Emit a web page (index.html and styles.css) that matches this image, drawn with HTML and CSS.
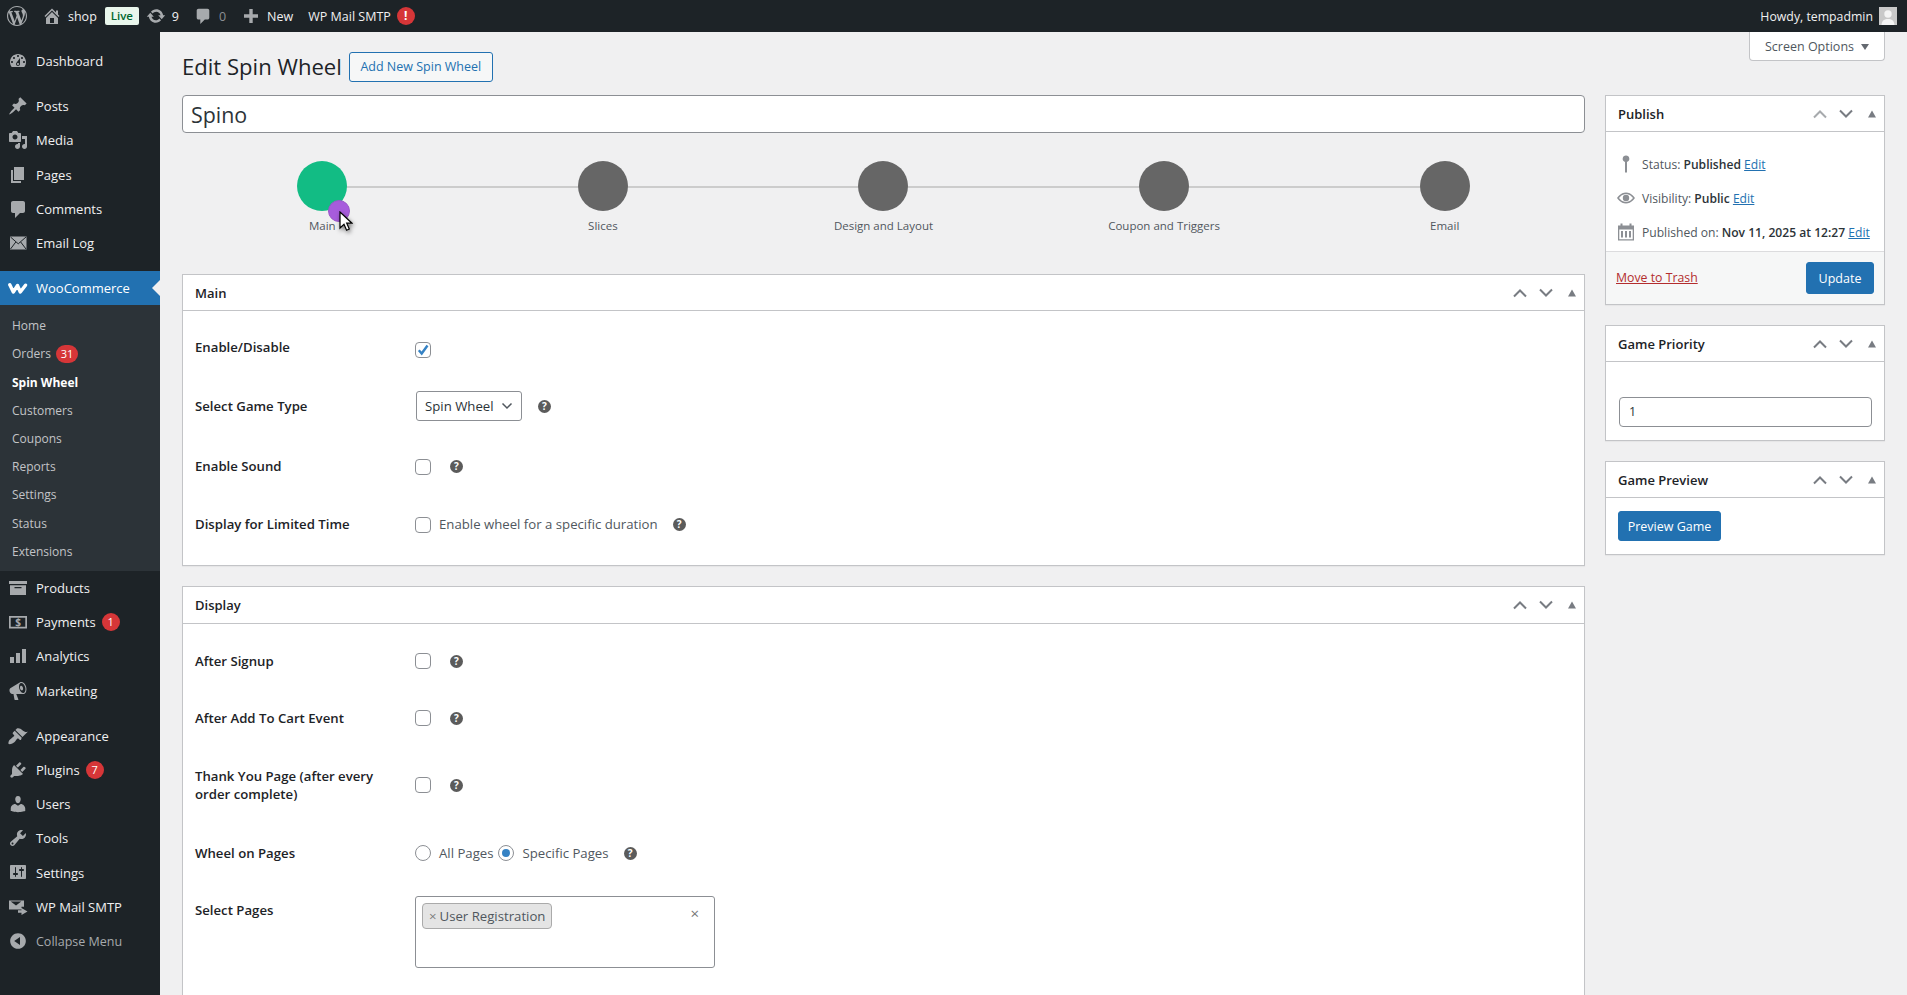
FILE: index.html
```html
<!DOCTYPE html>
<html lang="en">
<head>
<meta charset="utf-8">
<title>Edit Spin Wheel</title>
<link rel="stylesheet" href="styles.css">
</head>
<body>
<svg class="defs" width="0" height="0" aria-hidden="true">
  <symbol id="up" viewBox="0 0 16 10"><path d="M2 8.500 8 2.500l6 6" fill="none" stroke-width="2"/></symbol>
  <symbol id="down" viewBox="0 0 16 10"><path d="M2 1.500 8 7.500l6-6" fill="none" stroke-width="2"/></symbol>
  <symbol id="tri" viewBox="0 0 10 8"><path d="M5 .5 9 7.500H1z"/></symbol>
</svg>

<header class="adminbar">
  <div class="bar-left">
    <svg class="bar-logo" viewBox="0 0 20 20"><path d="M20 10c0-5.510-4.490-10-10-10C4.480 0 0 4.490 0 10c0 5.520 4.480 10 10 10 5.510 0 10-4.480 10-10zM7.780 15.370L4.370 6.220c.55-.02 1.170-.08 1.170-.08.5-.06.44-1.130-.06-1.110 0 0-1.450.11-2.370.11-.18 0-.37 0-.58-.01C4.120 2.690 6.870 1.110 10 1.110c2.330 0 4.450.87 6.050 2.340-.68-.11-1.650.39-1.650 1.580 0 .74.45 1.360.9 2.100.35.61.55 1.360.55 2.460 0 1.490-1.400 5-1.400 5l-3.030-8.370c.54-.02.82-.17.82-.17.5-.05.44-1.250-.06-1.220 0 0-1.440.12-2.380.12-.87 0-2.330-.12-2.330-.12-.5-.03-.56 1.200-.06 1.220l.92.08 1.260 3.410zM17.410 10c.24-.64.74-1.870.43-4.250.7 1.290 1.050 2.710 1.050 4.250 0 3.290-1.730 6.240-4.400 7.780.97-2.590 1.940-5.200 2.920-7.780zM6.100 18.090C3.120 16.650 1.110 13.530 1.110 10c0-1.300.23-2.480.72-3.590C3.250 10.300 4.670 14.200 6.100 18.090zm4.030-6.630l2.580 6.980c-.86.29-1.760.45-2.710.45-.79 0-1.570-.11-2.290-.33.81-2.380 1.620-4.740 2.420-7.100z"/></svg>
    <svg class="bar-ico home" viewBox="0 0 20 20"><path d="M16 8.500l1.530 1.530-1.060 1.060L10 4.620l-6.470 6.470-1.060-1.060L10 2.500l4 4v-2h2v4zm-6-2.460l6 5.990V18H4v-5.970zM12 17v-5H8v5h4z"/></svg>
    <span class="bar-text shop">shop</span>
    <span class="live">Live</span>
    <svg class="bar-ico upd" viewBox="0 0 20 20"><path d="M10.200 3.280c3.530 0 6.430 2.610 6.920 6h2.080l-3.500 4-3.500-4h2.320c-.45-1.970-2.210-3.450-4.320-3.450-1.450 0-2.730.71-3.540 1.780L4.950 5.660C6.230 4.200 8.110 3.280 10.200 3.280zm-.4 13.440c-3.520 0-6.430-2.610-6.920-6H.8l3.500-4c1.170 1.330 2.330 2.670 3.500 4H5.480c.45 1.970 2.210 3.450 4.320 3.450 1.450 0 2.730-.71 3.540-1.780l1.710 1.950c-1.280 1.460-3.150 2.380-5.250 2.380z"/></svg>
    <span class="bar-text nine">9</span>
    <svg class="bar-ico cmt" viewBox="0 0 20 20"><path d="M5 2h10c1.100 0 2 .9 2 2v8c0 1.100-.9 2-2 2h-3l-5 5v-5H5c-1.100 0-2-.9-2-2V4c0-1.100.9-2 2-2z"/></svg>
    <span class="bar-text zero">0</span>
    <svg class="bar-ico plus" viewBox="0 0 20 20"><path d="M8.300 3h3.400v5.300H17v3.400h-5.300V17H8.300v-5.300H3V8.300h5.300z"/></svg>
    <span class="bar-text newt">New</span>
    <span class="bar-text smtp">WP Mail SMTP</span>
    <span class="bar-alert">!</span>
  </div>
  <div class="bar-right">
    <span class="bar-text howdy">Howdy, tempadmin</span>
    <svg class="avatar" viewBox="0 0 18 18"><rect width="18" height="18" fill="#c9c9c9"/><circle cx="9" cy="7" r="3.700" fill="#f4f4f4"/><path d="M2.500 18c.3-4.500 3-6 6.500-6s6.200 1.500 6.500 6z" fill="#f4f4f4"/></svg>
  </div>
</header>

<div class="layout">
  <nav class="sidemenu">
    <a class="mi first"><svg viewBox="0 0 20 20"><path d="M3.760 16h12.480c1.100-1.370 1.760-3.110 1.760-5 0-4.420-3.580-8-8-8s-8 3.580-8 8c0 1.890.66 3.630 1.760 5zM10 4c.55 0 1 .45 1 1s-.45 1-1 1-1-.45-1-1 .45-1 1-1zM6 6c.55 0 1 .45 1 1s-.45 1-1 1-1-.45-1-1 .45-1 1-1zm8 0c.55 0 1 .45 1 1s-.45 1-1 1-1-.45-1-1 .45-1 1-1zm-5.370 5.550L12 7v6c0 1.100-.9 2-2 2s-2-.9-2-2c0-.57.24-1.080.63-1.450zM4 10c.55 0 1 .45 1 1s-.45 1-1 1-1-.45-1-1 .45-1 1-1zm12 0c.55 0 1 .45 1 1s-.45 1-1 1-1-.45-1-1 .45-1 1-1zm-5 3c0-.55-.45-1-1-1s-1 .45-1 1 .45 1 1 1 1-.45 1-1z"/></svg>Dashboard</a>
    <div class="sep"></div>
    <a class="mi"><svg viewBox="0 0 20 20"><path d="M10.440 3.020l1.820-1.820 6.360 6.350-1.830 1.820c-1.050-.68-2.480-.57-3.410.36l-.75.75c-.92.93-1.040 2.350-.35 3.410l-1.830 1.820-2.410-2.410-2.800 2.790c-.42.42-3.380 2.710-3.800 2.290s1.860-3.390 2.280-3.810l2.790-2.790L4.100 9.360l1.830-1.820c1.050.69 2.480.57 3.400-.36l.75-.75c.93-.92 1.050-2.350.36-3.410z"/></svg>Posts</a>
    <a class="mi"><svg viewBox="0 0 20 20"><path d="M13 11V4c0-.55-.45-1-1-1h-1.670L9 1H5L3.670 3H2c-.55 0-1 .45-1 1v7c0 .55.45 1 1 1h10c.55 0 1-.45 1-1zM7 4.500c1.380 0 2.500 1.120 2.500 2.500S8.380 9.500 7 9.500 4.500 8.380 4.500 7 5.620 4.500 7 4.500zM14 6h5v10.500c0 1.380-1.120 2.500-2.500 2.500S14 17.880 14 16.500s1.120-2.500 2.500-2.500c.17 0 .34.02.5.05V9h-3V6zm-4 8.050V13h2v3.500c0 1.380-1.120 2.500-2.500 2.500S7 17.880 7 16.500 8.120 14 9.500 14c.17 0 .34.02.5.05z"/></svg>Media</a>
    <a class="mi"><svg viewBox="0 0 20 20"><path d="M6 15V2h10v13H6zm-1 1h8v2H3V5h2v11z"/></svg>Pages</a>
    <a class="mi"><svg viewBox="0 0 20 20"><path d="M5 2h10c1.100 0 2 .9 2 2v8c0 1.100-.9 2-2 2h-3l-5 5v-5H5c-1.100 0-2-.9-2-2V4c0-1.100.9-2 2-2z"/></svg>Comments</a>
    <a class="mi"><svg viewBox="0 0 20 20"><rect x="2" y="3.500" width="16.500" height="13"/><path class="env" d="M2.500 4 10.250 10.800 18 4M2.500 16 7.800 9M18 16 12.700 9"/></svg>Email Log</a>
    <div class="sep"></div>
    <a class="mi current"><svg class="woo" viewBox="0 0 20 11"><path d="M1.800 1.800 5.300 9 9.500 2.500 12.300 9 17.500 2.200"/></svg>WooCommerce</a>
    <div class="submenu">
      <a class="si">Home</a>
      <a class="si">Orders<span class="count">31</span></a>
      <a class="si active">Spin Wheel</a>
      <a class="si">Customers</a>
      <a class="si">Coupons</a>
      <a class="si">Reports</a>
      <a class="si">Settings</a>
      <a class="si">Status</a>
      <a class="si">Extensions</a>
    </div>
    <a class="mi"><svg viewBox="0 0 20 20"><path d="M1 3h18v3H1zM2 7.200h16V17H2zM6.500 9v1.300h7V9z" fill-rule="evenodd"/></svg>Products</a>
    <a class="mi"><svg viewBox="0 0 20 20"><path d="M1 4h18v12.500H1zm1.700 1.700v9.100h14.600V5.700z" fill-rule="evenodd"/><text class="dollar" x="10" y="14.200" text-anchor="middle">$</text></svg>Payments<span class="count round">1</span></a>
    <a class="mi"><svg viewBox="0 0 20 20"><path d="M2 11h4v6H2zM8 7h4v10H8zM14 3h4v14h-4z"/></svg>Analytics</a>
    <a class="mi"><svg viewBox="0 0 20 20"><path d="M18.150 5.940c.46 1.620.38 3.220-.02 4.480-.42 1.280-1.260 2.180-2.300 2.480-.16.06-.26.06-.4.06-.06.02-.12.02-.18.02-.06.02-.14.02-.22.02H8.230l2.220 5.500c.02.14-.06.26-.14.34-.08.1-.24.16-.34.16H6.950c-.1 0-.26-.06-.34-.16-.08-.08-.16-.2-.14-.34l-1-5.500H4.250l-.02-.02c-.5.06-1.080-.18-1.540-.62s-.88-1.080-1.060-1.880c-.24-.8-.2-1.560-.02-2.200.18-.62.58-1.080 1.060-1.300l.02-.02 9-5.400c.1-.06.18-.1.24-.16.06-.04.14-.08.24-.12.16-.08.28-.12.5-.18 1.040-.3 2.240.1 3.220.98s1.840 2.240 2.260 3.860zm-2.580 5.980h-.02c.4-.1.74-.34 1.040-.7.58-.7.86-1.760.86-3.040-.02-.64-.12-1.300-.28-1.980-.34-1.360-1.020-2.500-1.780-3.240s-1.680-1.100-2.460-.88c-.82.22-1.400.96-1.700 2-.32 1.040-.28 2.360.06 3.720.38 1.360 1 2.500 1.800 3.240.78.74 1.620 1.100 2.480.88zm-2.540-7.080c.22-.04.42-.02.62.04.38.16.76.48 1.020 1s.42 1.200.42 1.780c0 .3-.04.56-.12.8-.18.48-.44.84-.86.94-.34.1-.8-.06-1.140-.4-.32-.26-.66-.74-.84-1.340-.14-.6-.2-1.160-.12-1.720.08-.54.3-.94.66-1.100.12-.02.24-.04.36-.06z"/></svg>Marketing</a>
    <div class="sep"></div>
    <a class="mi"><svg viewBox="0 0 20 20"><path d="M14.480 11.060L7.410 3.990l1.500-1.500c.5-.56 2.300-.47 3.510.32 1.210.8 1.430 1.280 2.910 2.100 1.180.64 2.450 1.260 4.450.85zm-.71.71L6.700 4.700 4.930 6.470c-.39.39-.39 1.020 0 1.410l1.060 1.060c.39.39.39 1.030 0 1.420-.6.6-1.430 1.110-2.210 1.690-.35.26-.7.53-1.010.84C1.430 13.230 0 15.890.61 18.100c2.020.49 4.650-.75 6.020-2.120.31-.31.58-.66.84-1.010.58-.78 1.090-1.610 1.690-2.210.39-.39 1.030-.39 1.420 0l1.060 1.060c.39.39 1.020.39 1.410 0z"/></svg>Appearance</a>
    <a class="mi"><svg viewBox="0 0 20 20"><path d="M13.110 4.360L9.870 7.600 8 5.730l3.240-3.240c.35-.34 1.050-.2 1.560.32.52.51.66 1.210.31 1.550zm-8 1.770l.91-1.120 9.010 9.010-1.190.84c-.71.71-2.630 1.160-3.820 1.160H6.140L4.900 17.260c-.59.59-1.540.59-2.120 0-.59-.58-.59-1.530 0-2.120l1.240-1.240v-3.880c0-1.130.4-3.190 1.090-3.890zm7.260 3.970l3.240-3.240c.34-.35 1.040-.21 1.550.31.52.51.66 1.210.31 1.550l-3.240 3.250z"/></svg>Plugins<span class="count round">7</span></a>
    <a class="mi"><svg viewBox="0 0 20 20"><path d="M10 9.250c-2.270 0-2.730-3.440-2.730-3.440C7 4.020 7.820 2 9.970 2c2.160 0 2.980 2.020 2.710 3.810 0 0-.41 3.440-2.680 3.440zm0 2.570L12.720 10c2.390 0 4.520 2.330 4.520 4.530v2.490s-3.650 1.130-7.240 1.130c-3.650 0-7.240-1.130-7.240-1.130v-2.490c0-2.250 1.940-4.480 4.470-4.480z"/></svg>Users</a>
    <a class="mi"><svg viewBox="0 0 20 20"><path d="M16.680 9.770c-1.340 1.340-3.300 1.670-4.950.99l-5.410 6.520c-.99.99-2.590.99-3.580 0s-.99-2.59 0-3.570l6.520-5.420c-.68-1.650-.35-3.610.99-4.950 1.280-1.280 3.120-1.620 4.720-1.060l-2.890 2.890 2.820 2.820 2.860-2.870c.53 1.580.18 3.390-1.080 4.650zM3.810 16.210c.4.39 1.040.39 1.430 0 .4-.4.4-1.040 0-1.430-.39-.4-1.030-.4-1.430 0-.39.39-.39 1.030 0 1.430z"/></svg>Tools</a>
    <a class="mi"><svg viewBox="0 0 20 20"><path d="M18 16V4c0-.55-.45-1-1-1H3c-.55 0-1 .45-1 1v12c0 .55.45 1 1 1h14c.55 0 1-.45 1-1zM8 11h1c.55 0 1 .45 1 1s-.45 1-1 1H8v1.500c0 .28-.22.5-.5.5s-.5-.22-.5-.5V13H6c-.55 0-1-.45-1-1s.45-1 1-1h1V5.500c0-.28.22-.5.5-.5s.5.22.5.5V11zm5-2h-1c-.55 0-1-.45-1-1s.45-1 1-1h1V5.500c0-.28.22-.5.5-.5s.5.22.5.5V7h1c.55 0 1 .45 1 1s-.45 1-1 1h-1v5.500c0 .28-.22.5-.5.5s-.5-.22-.5-.5V9z"/></svg>Settings</a>
    <a class="mi"><svg viewBox="0 0 20 20"><path d="M1 3.500h15v6.200h-2.500v2.800H1zm1.700 1 5.300 4 5.300-4zM13.500 11v2.200H10v2.600h3.500V18l6-3.500z" fill-rule="evenodd"/></svg>WP Mail SMTP</a>
    <a class="mi collapse"><svg viewBox="0 0 20 20"><path d="M10 2.160c4.330 0 7.840 3.510 7.840 7.840s-3.510 7.840-7.840 7.840S2.160 14.330 2.160 10 5.710 2.160 10 2.160zm2 11.720V6.120L6.180 9.970z"/></svg>Collapse Menu</a>
  </nav>

  <main class="content">
    <div class="screen-row"><button class="screen-opt">Screen Options<span class="caret"></span></button></div>
    <div class="heading">
      <h1>Edit Spin Wheel</h1>
      <a class="add-new">Add New Spin Wheel</a>
    </div>
    <div class="columns">
      <div class="col-main">
        <div class="title-input">Spino</div>
        <div class="stepper">
          <div class="step done"><span class="dot"></span><span class="step-label">Main</span></div>
          <div class="step"><span class="dot"></span><span class="step-label">Slices</span></div>
          <div class="step"><span class="dot"></span><span class="step-label">Design and Layout</span></div>
          <div class="step"><span class="dot"></span><span class="step-label">Coupon and Triggers</span></div>
          <div class="step"><span class="dot"></span><span class="step-label">Email</span></div>
          <span class="touch"></span>
          <svg class="cursor" viewBox="0 0 14 22"><path d="M1 1v16l4-3.800 2.600 6 2.700-1.200-2.600-5.800h5.300z" fill="#fff" stroke="#000" stroke-width="1.200"/></svg>
        </div>

        <section class="box main-box">
          <div class="box-head">
            <h2>Main</h2>
            <div class="handles">
              <svg class="hd"><use href="#up"/></svg><svg class="hd"><use href="#down"/></svg><svg class="hd tri"><use href="#tri"/></svg>
            </div>
          </div>
          <div class="box-body">
            <div class="row"><div class="lbl">Enable/Disable</div><div class="fld low"><span class="check on"><svg viewBox="0 0 14 14"><path d="M2.800 7.200 5.700 10.500 11.500 2.500" fill="none" stroke-width="2.400"/></svg></span></div></div>
            <div class="row down"><div class="lbl">Select Game Type</div><div class="fld"><span class="select">Spin Wheel<svg viewBox="0 0 12 8"><path d="M1.500 1.500 6 6l4.500-4.500" fill="none" stroke-width="1.500"/></svg></span><span class="help sel">?</span></div></div>
            <div class="row gap"><div class="lbl">Enable Sound</div><div class="fld"><span class="check"></span><span class="help">?</span></div></div>
            <div class="row"><div class="lbl">Display for Limited Time</div><div class="fld"><span class="check"></span><span class="cap">Enable wheel for a specific duration</span><span class="help lim">?</span></div></div>
          </div>
        </section>

        <section class="box disp-box">
          <div class="box-head">
            <h2>Display</h2>
            <div class="handles">
              <svg class="hd"><use href="#up"/></svg><svg class="hd"><use href="#down"/></svg><svg class="hd tri"><use href="#tri"/></svg>
            </div>
          </div>
          <div class="box-body">
            <div class="row"><div class="lbl">After Signup</div><div class="fld"><span class="check"></span><span class="help">?</span></div></div>
            <div class="row tight"><div class="lbl">After Add To Cart Event</div><div class="fld"><span class="check"></span><span class="help">?</span></div></div>
            <div class="row tall"><div class="lbl">Thank You Page (after every order complete)</div><div class="fld"><span class="check"></span><span class="help">?</span></div></div>
            <div class="row"><div class="lbl">Wheel on Pages</div><div class="fld"><span class="radio"></span><span class="cap">All Pages</span><span class="radio on"></span><span class="cap spec">Specific Pages</span><span class="help lim">?</span></div></div>
            <div class="row top"><div class="lbl">Select Pages</div><div class="fld"><div class="multi"><span class="tag"><i>×</i>User Registration</span><span class="clear">×</span></div></div></div>
          </div>
        </section>
      </div>

      <aside class="col-side">
        <section class="box side">
          <div class="box-head">
            <h2>Publish</h2>
            <div class="handles">
              <svg class="hd off"><use href="#up"/></svg><svg class="hd"><use href="#down"/></svg><svg class="hd tri"><use href="#tri"/></svg>
            </div>
          </div>
          <div class="pub-body">
            <div class="pub-row"><svg viewBox="0 0 20 20"><path d="M10 1.500a3.300 3.300 0 0 1 1 6.450V18.500H9V7.950A3.300 3.300 0 0 1 10 1.500z"/></svg><span>Status: <b>Published</b> <a>Edit</a></span></div>
            <div class="pub-row"><svg viewBox="0 0 20 20"><path d="M1 10s3.500-5.500 9-5.500S19 10 19 10s-3.500 5.500-9 5.500S1 10 1 10zm2 0c1.300 1.700 3.800 4 7 4s5.700-2.300 7-4c-1.300-1.700-3.800-4-7-4s-5.700 2.300-7 4zm7-3.200a3.200 3.200 0 1 1 0 6.400 3.200 3.200 0 0 1 0-6.400z" fill-rule="evenodd"/></svg><span>Visibility: <b>Public</b> <a>Edit</a></span></div>
            <div class="pub-row"><svg viewBox="0 0 20 20"><path d="M2 3.500h2.500V1.500h2v2h7v-2h2v2H18V18.500H2zM3.300 7.500V17.200h13.400V7.500zM5 9h2v6.500H5zM9 9h2v6.500H9zM13 9h2v6.500h-2z" fill-rule="evenodd"/></svg><span>Published on: <b>Nov 11, 2025 at 12:27</b> <a>Edit</a></span></div>
          </div>
          <div class="pub-foot"><a class="trash">Move to Trash</a><button class="primary upd-btn">Update</button></div>
        </section>

        <section class="box side">
          <div class="box-head">
            <h2>Game Priority</h2>
            <div class="handles">
              <svg class="hd"><use href="#up"/></svg><svg class="hd"><use href="#down"/></svg><svg class="hd tri"><use href="#tri"/></svg>
            </div>
          </div>
          <div class="prio-body"><div class="num-input">1</div></div>
        </section>

        <section class="box side">
          <div class="box-head">
            <h2>Game Preview</h2>
            <div class="handles">
              <svg class="hd"><use href="#up"/></svg><svg class="hd"><use href="#down"/></svg><svg class="hd tri"><use href="#tri"/></svg>
            </div>
          </div>
          <div class="prev-body"><button class="primary">Preview Game</button></div>
        </section>
      </aside>
    </div>
  </main>
</div>
</body>
</html>
```

FILE: styles.css
```css
* { box-sizing: border-box; }
html, body { height: 995px; overflow: hidden; }
body {
  margin: 0;
  background: #f0f0f1;
  color: #1d2327;
  font-family: "Open Sans", "Noto Sans", sans-serif;
  font-size: 12.5px;
}
.defs { position: absolute; }
a { color: inherit; text-decoration: none; }

/* admin bar */
.adminbar {
  height: 32px;
  background: #1d2327;
  color: #f0f0f1;
  display: flex;
  align-items: center;
  justify-content: space-between;
  font-size: 12.5px;
}
.bar-left, .bar-right { display: flex; align-items: center; }
.bar-right { padding-right: 10px; }
.bar-logo { width: 20px; height: 20px; margin-left: 7px; fill: #a7aaad; }
.bar-ico { width: 20px; height: 20px; fill: #a7aaad; }
.bar-ico.home { margin-left: 15px; }
.bar-text { white-space: nowrap; }
.howdy { font-size: 12.3px; }
.shop { margin-left: 6px; }
.live {
  margin-left: 8px;
  width: 34px;
  height: 18px;
  border-radius: 2px;
  background: #e9f6ec;
  color: #00662f;
  font-size: 11.5px;
  font-weight: 600;
  text-align: center;
  line-height: 18px;
}
.bar-ico.upd { margin-left: 7px; }
.nine { margin-left: 6px; }
.bar-ico.cmt { margin-left: 15px; width: 18px; height: 18px; }
.zero { margin-left: 7px; color: #8c8f94; }
.bar-ico.plus { margin-left: 15px; }
.newt { margin-left: 6px; }
.smtp { margin-left: 15px; }
.bar-alert {
  margin-left: 6px;
  width: 18px;
  height: 18px;
  border-radius: 50%;
  background: #d63638;
  color: #fff;
  font-size: 12px;
  font-weight: 700;
  text-align: center;
  line-height: 18px;
}
.avatar { width: 18px; height: 18px; margin-left: 6px; }

/* layout */
.layout { display: flex; height: 963px; }
.sidemenu {
  width: 160px;
  flex: none;
  background: #1d2327;
  color: #f0f0f1;
  font-size: 13px;
  padding-top: 12px;
}
.mi {
  position: relative;
  display: flex;
  align-items: center;
  height: 34.2px;
  padding-left: 36px;
  white-space: nowrap;
}
.mi > svg {
  position: absolute;
  left: 8px;
  top: 7px;
  width: 20px;
  height: 20px;
  fill: #a7aaad;
}
.env { fill: none; stroke: #1d2327; stroke-width: 1; }
.sep { height: 11px; }
.mi.current { background: #2271b1; color: #fff; }
.mi.current::after {
  content: "";
  position: absolute;
  right: 0;
  top: 9px;
  border: 8px solid transparent;
  border-right-color: #f0f0f1;
}
.mi.current > svg.woo {
  left: 8px;
  top: 12px;
  width: 20px;
  height: 11px;
  fill: none;
  stroke: #fff;
  stroke-width: 3.400;
  stroke-linecap: round;
  stroke-linejoin: round;
}
.dollar { font-size: 10px; font-weight: 700; fill: #a7aaad; font-family: "Open Sans", sans-serif; }
.mi.collapse { color: #a7aaad; font-size: 12.5px; padding-top: 1px; }
.submenu { background: #2c3338; padding: 6.3px 0 5.7px; font-size: 12px; color: #c3c4c7; }
.si { display: flex; align-items: center; height: 28.2px; padding-left: 12px; }
.si.active { color: #fff; font-weight: 700; }
.count {
  margin-left: 5px;
  min-width: 22px;
  height: 18px;
  padding: 0 4px;
  border-radius: 9px;
  background: #d63638;
  color: #fff;
  font-size: 11px;
  text-align: center;
  line-height: 18px;
}
.count.round { min-width: 18px; margin-left: 6px; padding: 0; }

/* content */
.content { flex: 1; padding: 0 22px; position: relative; min-width: 0; }
.screen-row { display: flex; justify-content: flex-end; height: 29px; }
.screen-opt {
  width: 136px;
  height: 29px;
  background: #fff;
  border: 1px solid #c3c4c7;
  border-top: 0;
  border-radius: 0 0 4px 4px;
  color: #50575e;
  font: inherit;
  font-size: 12.5px;
  padding: 0;
  display: flex;
  align-items: center;
  justify-content: center;
}
.caret {
  margin-left: 7px;
  margin-top: 1px;
  border-style: solid;
  border-width: 6px 4px 0;
  border-color: #646970 transparent transparent;
}
.heading { display: flex; align-items: center; height: 30px; margin-top: -9px; position: relative; }
h1 { margin: 0 0 2px; font-size: 22.1px; font-weight: 400; color: #1d2327; }
.add-new {
  margin-left: 7px;
  width: 144px;
  height: 30px;
  border: 1px solid #2271b1;
  border-radius: 3px;
  background: #f6f7f7;
  color: #2271b1;
  font-size: 12.5px;
  line-height: 28px;
  text-align: center;
}
.columns { display: flex; gap: 20px; margin-top: 13px; align-items: flex-start; }
.col-main { width: 1403px; flex: none; }
.col-side { width: 280px; flex: none; }

.title-input {
  height: 38px;
  border: 1px solid #8c8f94;
  border-radius: 4px;
  background: #fff;
  padding-left: 8px;
  font-size: 21.4px;
  line-height: 38px;
  color: #2c3338;
}

/* stepper */
.stepper { display: flex; position: relative; height: 141px; padding-top: 28px; }
.stepper::before {
  content: "";
  position: absolute;
  left: 140px;
  right: 140px;
  top: 53px;
  height: 2px;
  background: #ccc;
}
.step { flex: 1; display: flex; flex-direction: column; align-items: center; position: relative; }
.dot { width: 50px; height: 50px; border-radius: 50%; background: #666; }
.step.done .dot { background: #12bc84; }
.step-label { margin-top: 6px; font-size: 11.5px; color: #50575e; line-height: 17px; }
.touch {
  position: absolute;
  left: 146px;
  top: 67px;
  width: 22px;
  height: 22px;
  border-radius: 50%;
  background: #a75cdc;
  border: 1px solid #9a58c8;
}
.cursor {
  position: absolute;
  left: 157px;
  top: 78px;
  width: 14px;
  height: 22px;
  filter: drop-shadow(1px 2px 2px rgba(0,0,0,.5));
}

/* boxes */
.box { background: #fff; border: 1px solid #c3c4c7; box-shadow: 0 1px 1px rgba(0,0,0,.04); }
.box-head {
  height: 36px;
  display: flex;
  align-items: center;
  justify-content: space-between;
  padding-left: 12px;
  border-bottom: 1px solid #c3c4c7;
}
h2 { margin: 0; font-size: 13px; font-weight: 600; color: #1d2327; }
.handles { display: flex; align-items: center; margin-right: -1px; }
.hd { width: 26px; height: 10px; stroke: #787c82; fill: #787c82; }
.hd.off { stroke: #a7aaad; }
.hd.tri { height: 8px; stroke: none; }
.main-box { height: 292px; }
.disp-box { margin-top: 20px; height: 500px; }
.disp-box .box-head { height: 37px; }

.box-body { padding: 7px 12px 0; }
.disp-box .box-body { padding-top: 8px; }
.row { display: flex; align-items: center; min-height: 58px; }
.row.down { padding-top: 2px; }
.row.gap { margin-top: 3px; }
.row.tight { margin-top: -1px; }
.row.tall { min-height: 72px; margin: 2px 0 3px; }
.row.top { align-items: flex-start; padding-top: 14px; }
.lbl { width: 220px; flex: none; padding-right: 30px; font-size: 13.2px; font-weight: 600; line-height: 18px; color: #1d2327; }
.row.top .lbl { padding-top: 5px; }
.fld { display: flex; align-items: center; color: #50575e; font-size: 13.2px; }
.fld.low { padding-top: 3px; }
.check {
  width: 16px;
  height: 16px;
  border: 1px solid #8c8f94;
  border-radius: 4px;
  background: #fff;
  display: block;
  flex: none;
  margin-top: 2px;
}
.disp-box .check { margin-top: 0; }
.check svg { display: block; width: 14px; height: 14px; stroke: #3582c4; }
.radio {
  width: 16px;
  height: 16px;
  border: 1px solid #8c8f94;
  border-radius: 50%;
  background: #fff;
  flex: none;
  position: relative;
}
.radio.on { margin: -1px 0 0 4px; }
.radio.on::after {
  content: "";
  position: absolute;
  left: 3px;
  top: 3px;
  width: 8px;
  height: 8px;
  border-radius: 50%;
  background: #3582c4;
}
.cap { margin-left: 8px; }
.cap.spec { margin-left: 9px; }
.select {
  display: flex;
  align-items: center;
  justify-content: space-between;
  width: 106px;
  height: 30px;
  margin-left: 1px;
  padding: 0 8px;
  border: 1px solid #8c8f94;
  border-radius: 3px;
  background: #fff;
  color: #2c3338;
}
.select svg { width: 12px; height: 8px; stroke: #50575e; }
.help {
  width: 13px;
  height: 13px;
  margin-left: 19px;
  border-radius: 50%;
  background: #5b5b5b;
  color: #fff;
  font-size: 10px;
  font-weight: 700;
  line-height: 13px;
  text-align: center;
  flex: none;
}
.help.sel { margin-left: 16px; }
.help.lim { margin-left: 15px; }
.multi {
  position: relative;
  width: 300px;
  height: 72px;
  padding: 6px;
  border: 1px solid #8c8f94;
  border-radius: 3px;
  background: #fff;
}
.tag {
  display: inline-block;
  height: 26px;
  padding: 0 6px;
  border: 1px solid #aaa;
  border-radius: 4px;
  background: #e4e4e4;
  color: #50575e;
  line-height: 24px;
}
.tag i { font-style: normal; color: #777; margin-right: 3px; }
.clear { position: absolute; right: 15px; top: 6px; color: #777; font-size: 15px; line-height: 20px; }

/* side boxes */
.side { margin-bottom: 20px; }
.pub-body { padding-top: 15px; height: 119px; }
.pub-row { position: relative; height: 34px; display: flex; align-items: center; padding-left: 36px; color: #50575e; font-size: 12.1px; white-space: nowrap; }
.pub-row svg { position: absolute; left: 10px; top: 7px; width: 20px; height: 20px; fill: #8c8f94; }
.pub-row b { color: #2c3338; font-weight: 600; }
.pub-row a { color: #2271b1; text-decoration: underline; }
.pub-foot {
  height: 53px;
  background: #f6f7f7;
  border-top: 1px solid #dcdcde;
  display: flex;
  align-items: center;
  justify-content: space-between;
  padding: 0 10px;
}
.trash { color: #b32d2e; text-decoration: underline; font-size: 12.3px; margin-top: -2px; }
.primary {
  height: 30px;
  padding: 0 10px;
  border: 1px solid #2271b1;
  border-radius: 3px;
  background: #2271b1;
  color: #fff;
  font: inherit;
  font-size: 12.5px;
}
.upd-btn { width: 68px; height: 32px; padding: 0; }
.prio-body { padding: 35px 12px 12px 13px; height: 78px; }
.num-input {
  height: 30px;
  border: 1px solid #8c8f94;
  border-radius: 4px;
  background: #fff;
  padding-left: 9px;
  line-height: 28px;
  color: #2c3338;
}
.prev-body { padding: 13px 12px 13px; height: 56px; }
.prev-body .primary { width: 103px; padding: 0; }
```
